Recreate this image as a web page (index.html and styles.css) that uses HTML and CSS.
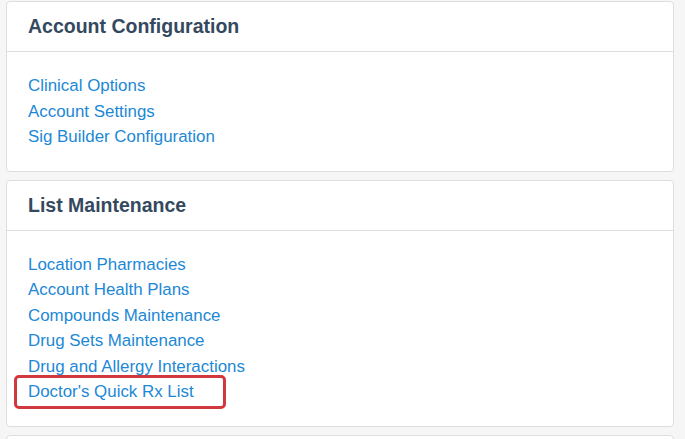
FILE: index.html
```html
<!DOCTYPE html>
<html>
<head>
<meta charset="utf-8">
<link rel="stylesheet" href="styles.css">
</head>
<body>
<div class="page">
  <section class="card">
    <div class="card-header"><h2>Account Configuration</h2></div>
    <div class="card-body">
      <a href="#">Clinical Options</a>
      <a href="#">Account Settings</a>
      <a href="#">Sig Builder Configuration</a>
    </div>
  </section>
  <section class="card">
    <div class="card-header"><h2>List Maintenance</h2></div>
    <div class="card-body">
      <a href="#">Location Pharmacies</a>
      <a href="#">Account Health Plans</a>
      <a href="#">Compounds Maintenance</a>
      <a href="#">Drug Sets Maintenance</a>
      <a href="#">Drug and Allergy Interactions</a>
      <a href="#" class="highlighted">Doctor's Quick Rx List<span class="mark"></span></a>
    </div>
  </section>
  <section class="card">
    <div class="card-header"><h2>&nbsp;</h2></div>
  </section>
</div>
</body>
</html>
```

FILE: styles.css
```css
html, body {
  margin: 0;
  padding: 0;
  background: #f6f6f7;
  font-family: "Liberation Sans", Arial, sans-serif;
}
.page {
  padding: 1px 11px 0 6px;
  display: flex;
  flex-direction: column;
  gap: 8px;
}
.card {
  background: #fff;
  border: 1px solid #dedede;
  border-radius: 4px;
}
.card-header {
  height: 49px;
  border-bottom: 1px solid #dedede;
  display: flex;
  align-items: center;
  padding: 0 21px;
}
.card-header h2 {
  margin: 0;
  font-size: 19.5px;
  font-weight: bold;
  color: #34495e;
}
.card-body {
  padding: 21px 21px 21px 21px;
  display: flex;
  flex-direction: column;
  align-items: flex-start;
}
.card-body a {
  font-size: 16.9px;
  line-height: 25.5px;
  color: #1c88d6;
  text-decoration: none;
}
.highlighted {
  position: relative;
}
.mark {
  position: absolute;
  left: -14px;
  top: -4px;
  width: 212px;
  height: 34px;
  box-sizing: border-box;
  border: 3px solid #d2393f;
  border-radius: 5px;
}
```
